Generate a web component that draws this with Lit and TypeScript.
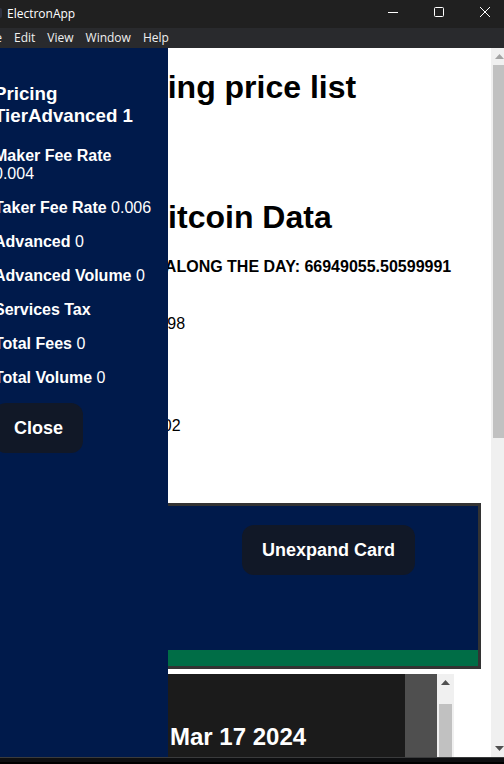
import { LitElement, html, css } from "lit";
import { customElement } from "lit/decorators.js";

const fees: [string, string][] = [
  ["Maker Fee Rate", "0.004"],
  ["Taker Fee Rate", "0.006"],
  ["Advanced", "0"],
  ["Advanced Volume", "0"],
  ["Services Tax", ""],
  ["Total Fees", "0"],
  ["Total Volume", "0"],
];

@customElement("app-root")
export class AppRoot extends LitElement {
  static styles = css`
    :host {
      display: flex;
      flex-direction: column;
      height: 100vh;
      overflow: hidden;
      font: 16px "Liberation Sans", Arial, sans-serif;
      color: #000;
      background: #fff;
    }
    * { box-sizing: border-box; }
    button { font-family: inherit; border: 0; cursor: pointer; }
    h1, h2, h3, p { margin: 0; }

    .titlebar {
      flex: none;
      display: flex;
      align-items: flex-start;
      justify-content: space-between;
      height: 28px;
      background: #202020;
      color: #fff;
      font: 12px "Open Sans", "Noto Sans", sans-serif;
    }
    .brand { display: flex; align-items: center; gap: 5px; height: 26px; }
    .logo { width: 2px; height: 10px; border-radius: 0 4px 4px 0; background: #2f3241; }
    .controls { display: flex; height: 24px; margin-right: -4px; }
    .controls button { width: 46px; padding: 0; background: none; color: #fff; display: grid; place-items: center; }
    .controls svg { display: block; fill: none; stroke: currentColor; }

    .menubar {
      flex: none;
      display: flex;
      height: 20px;
      background: #292a2d;
      overflow: hidden;
    }
    .menu { display: flex; margin-left: -23px; }
    .menu button {
      padding: 0 6px;
      background: none;
      color: #f0f0f0;
      font: 12px/20px "Open Sans", "Noto Sans", sans-serif;
    }

    .window { flex: 1; min-height: 0; display: flex; position: relative; overflow: hidden; }
    .page { flex: 1; min-width: 0; overflow: hidden; }
    .prices { padding: 21px 0 0 109px; height: 151px; }
    .data { padding-left: 145px; height: 304px; white-space: nowrap; }
    h1 { font-size: 32px; line-height: 37px; }
    .total { margin-top: 22px; font-weight: bold; line-height: 18px; }
    .reading { margin-top: 39px; line-height: 18px; }
    .reading + .reading { margin-top: 84px; }

    .card {
      display: flex;
      flex-direction: column;
      align-items: flex-end;
      margin-right: 10px;
      height: 166px;
      border: 3px solid #333;
      background: #001a4b;
    }
    .btn {
      height: 50px;
      padding: 0 20px;
      border-radius: 12px;
      background: #111827;
      color: #fff;
      font-size: 18px;
      font-weight: bold;
    }
    .card .btn { margin: 19px 63px 0 0; }
    .strip { margin-top: auto; width: 100%; height: 16px; background: #006d46; }

    .days { display: flex; margin: 5px 37px 0 0; height: 200px; }
    .day { flex: 1; padding: 49px 0 0 170px; background: #1b1b1b; color: #fff; }
    h2 { font-size: 24px; line-height: 28px; }
    .gutter { width: 32px; background: #4f4f4f; }

    .bar {
      flex: none;
      display: flex;
      flex-direction: column;
      align-items: center;
      width: 17px;
      background: #f0f0f0;
      color: #505050;
    }
    .bar svg { flex: none; display: block; width: 17px; height: 17px; fill: currentColor; }
    .bar .off { color: #a3a3a3; }
    .thumb { width: 13px; background: #c1c1c1; }
    .outer { margin-right: -4px; }
    .run { flex: 1; width: 13px; }
    .outer .thumb { height: 55.3%; }
    .inner .thumb { flex: 1; margin-top: 13px; }

    .sidebar {
      position: absolute;
      inset: 0 auto 0 -20px;
      width: 188px;
      padding: 35px 14px 0;
      background: #001a4b;
      color: #fff;
    }
    h3 { font-size: 1.17em; line-height: 22px; margin-bottom: 20px; }
    .sidebar p { line-height: 18px; margin-bottom: 16px; }

    .desk {
      flex: none;
      height: 7px;
      background: #0e0f11;
      border-top: 1px solid #3a3b3c;
      border-bottom: 2px solid #000;
    }
  `;

  render() {
    const up = "M4 11 8.5 6 13 11Z";
    return html`
      <header class="titlebar">
        <div class="brand"><span class="logo"></span><span>ElectronApp</span></div>
        <div class="controls">
          <button aria-label="Minimize"><svg width="10" height="10"><path d="M0 5.5H10" /></svg></button>
          <button aria-label="Maximize"><svg width="10" height="10"><rect x=".5" y=".5" width="9" height="9" rx="1" /></svg></button>
          <button aria-label="Close window"><svg width="10" height="10"><path d="M0 0 10 10M10 0 0 10" /></svg></button>
        </div>
      </header>
      <nav class="menubar">
        <div class="menu">
          ${["File", "Edit", "View", "Window", "Help"].map((m) => html`<button>${m}</button>`)}
        </div>
      </nav>
      <div class="window">
        <main class="page">
          <section class="prices"><h1>pricing price list</h1></section>
          <section class="data">
            <h1>Bitcoin Data</h1>
            <p class="total">IN ALONG THE DAY: 66949055.50599991</p>
            <p class="reading">67.98</p>
            <p class="reading">6702</p>
          </section>
          <section class="card">
            <button class="btn">Unexpand Card</button>
            <div class="strip"></div>
          </section>
          <section class="days">
            <div class="day"><h2>Mar 17 2024</h2></div>
            <div class="gutter"></div>
            <div class="bar inner">
              <svg viewBox="0 0 17 17"><path d=${up} /></svg>
              <div class="thumb"></div>
            </div>
          </section>
        </main>
        <div class="bar outer">
          <svg class="off" viewBox="0 0 17 17"><path d=${up} /></svg>
          <div class="run"><div class="thumb"></div></div>
          <svg viewBox="0 0 17 17"><path d="M4 6 8.5 11 13 6Z" /></svg>
        </div>
        <aside class="sidebar">
          <h3>Pricing TierAdvanced 1</h3>
          ${fees.map(([label, value]) => html`<p><b>${label}</b> ${value}</p>`)}
          <button class="btn">Close</button>
        </aside>
      </div>
      <footer class="desk"></footer>
    `;
  }
}
